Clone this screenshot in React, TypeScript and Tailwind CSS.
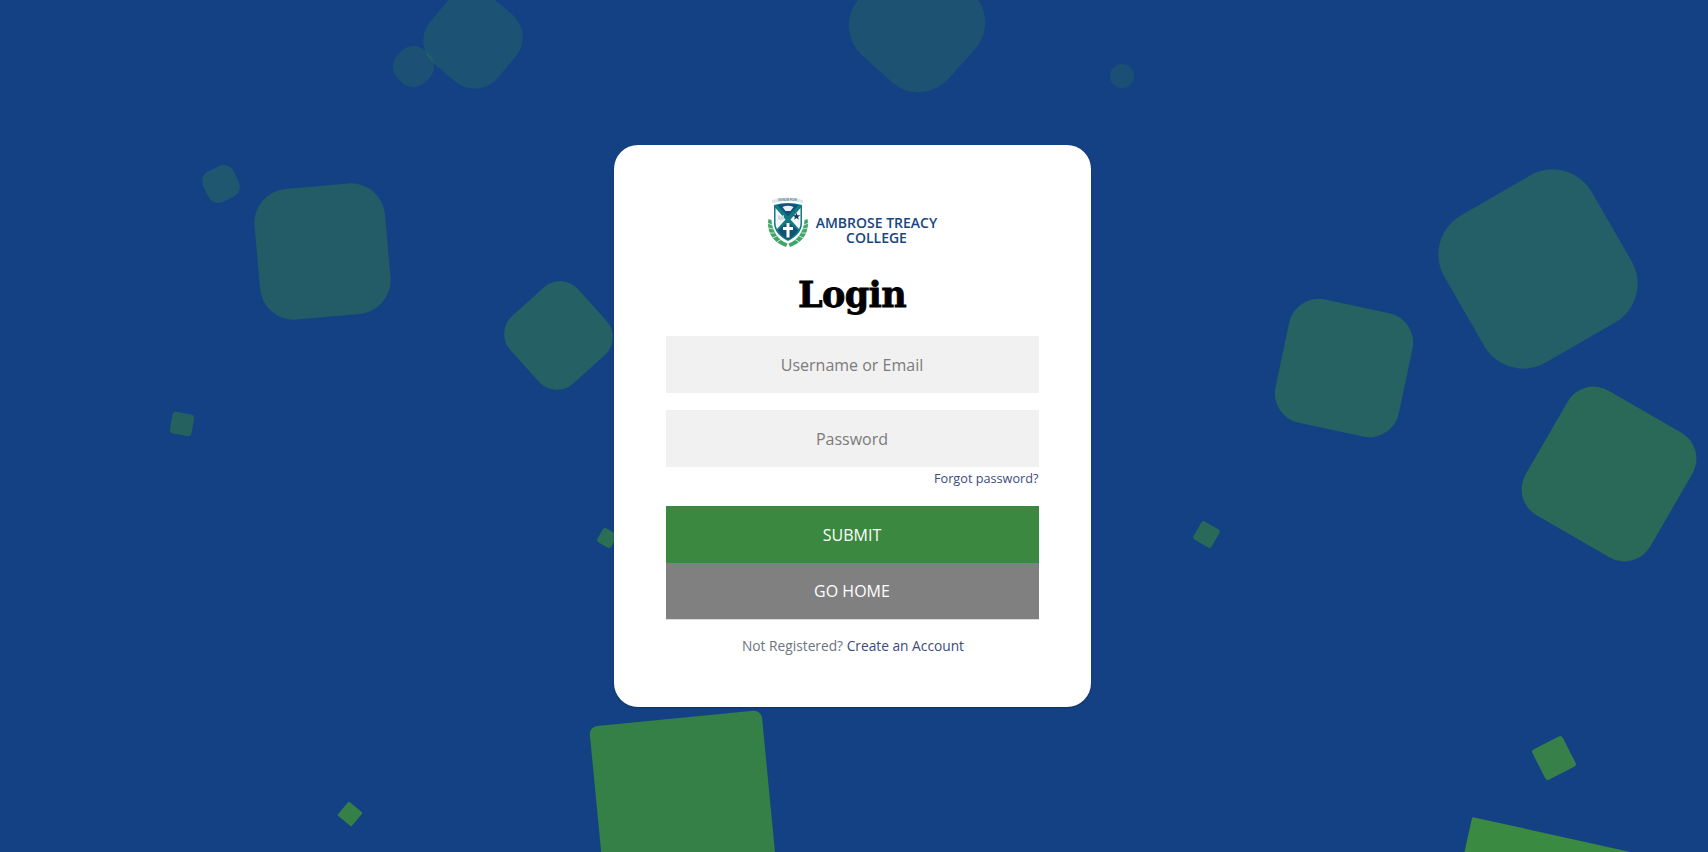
import React from 'react';

const Shapes: React.FC = () => (
  <>
    <div className="absolute left-[429px] top-[-5px] w-[88px] h-[88px] rotate-[40deg] rounded-[30px] bg-[#3a8a42]/[0.23]" />
    <div className="absolute left-[394px] top-[47px] w-[39px] h-[39px] rotate-[45deg] rounded-[17px] bg-[#3a8a42]/[0.22]" />
    <div className="absolute left-[857px] top-[-36px] w-[120px] h-[120px] rotate-[42deg] rounded-[40px] bg-[#1d5273]" />
    <div className="absolute left-[1110px] top-[64px] w-[24px] h-[24px] rounded-full bg-[#1b4f75]" />
    <div className="absolute left-[204px] top-[167px] w-[34px] h-[34px] -rotate-[25deg] rounded-[11px] bg-[#1f5670]" />
    <div className="absolute left-[257px] top-[186px] w-[131px] h-[131px] -rotate-[5deg] rounded-[34px] bg-[#235c67]" />
    <div className="absolute left-[513px] top-[290px] w-[91px] h-[91px] rotate-[48deg] rounded-[24px] bg-[#246064]" />
    <div className="absolute left-[171px] top-[413px] w-[22px] h-[22px] rotate-[10deg] rounded-[4px] bg-[#25625f]" />
    <div className="absolute left-[599px] top-[530px] w-[16px] h-[16px] rotate-[30deg] rounded-[3px] bg-[#2a6e55]" />
    <div className="absolute left-[341px] top-[805px] w-[18px] h-[18px] rotate-[40deg] rounded-[1px] bg-[#348047]" />
    <div className="absolute left-[597px] top-[718px] w-[173px] h-[173px] -rotate-[5.5deg] rounded-[8px] bg-[#348047]" />
    <div className="absolute left-[1441px] top-[842px] w-[260px] h-[260px] rotate-[12.5deg] rounded-[2px] bg-[#3a8a42]" />
    <div className="absolute left-[1537px] top-[741px] w-[34px] h-[34px] -rotate-[27deg] rounded-[3px] bg-[#37804a]" />
    <div className="absolute left-[1196px] top-[524px] w-[21px] h-[21px] rotate-[30deg] rounded-[3px] bg-[#29695a]" />
    <div className="absolute left-[1281px] top-[305px] w-[126px] h-[126px] rotate-[12deg] rounded-[30px] bg-[#266262]" />
    <div className="absolute left-[1453px] top-[184px] w-[170px] h-[170px] -rotate-[30deg] rounded-[45px] bg-[#245e67]" />
    <div className="absolute left-[1537px] top-[402px] w-[144px] h-[144px] rotate-[30deg] rounded-[30px] bg-[#2a6958]" />
  </>
);

const Crest: React.FC = () => (
  <svg width="42" height="52" viewBox="0 0 42 52" className="shrink-0">
    {/* motto banner */}
    <path d="M5 4 Q21 -1 36 4 L36 7 Q21 3 5 7 Z" fill="#dde7ea" />
    <text x="20.500" y="5" textAnchor="middle" fontSize="2.800" fill="#2c4f73" fontFamily="Liberation Sans, sans-serif">
      SIGNUM FIDEI
    </text>
    {/* laurel */}
    <path d="M1.500 23 C-1 35 6 47 19 51 L20.500 47.500 C11 44 5 35 4.500 24 Z" fill="#3fa66a" />
    <path d="M40.500 23 C43 35 36 47 23 51 L21.500 47.500 C31 44 37 35 37.500 24 Z" fill="#3fa66a" />
    <path d="M0.500 27 L5 29 M1 32 L6 33 M2.500 37 L7.500 37 M5.500 42 L10 40 M10 46 L14 43.500" stroke="#fff" strokeWidth="0.7" />
    <path d="M41.500 27 L37 29 M41 32 L36 33 M39.500 37 L34.500 37 M36.500 42 L32 40 M32 46 L28 43.500" stroke="#fff" strokeWidth="0.7" />
    {/* shield */}
    <path d="M7 9 Q21 5 35 9 L35 27 Q35 38 21 45 Q7 38 7 27 Z" fill="#127a80" />
    <path d="M10.500 9 Q21 6.500 31.500 9 L21 20.500 Z" fill="#12527a" />
    <path d="M8.500 12 L18.500 23.500 L10 33 Q8.500 30 8.500 27 Z" fill="#f3f7f7" />
    <path d="M33.500 12 L23.500 23.500 L32 33 Q33.500 30 33.500 27 Z" fill="#f3f7f7" />
    <path d="M21 26 L31 34.500 Q27.500 40 21 43.500 Q14.500 40 11 34.500 Z" fill="#12527a" />
    {/* dove, book, star, cross */}
    <path d="M15.500 11 Q21 8.500 26.500 11 L23.500 15 H18.500 Z" fill="#e9f1f4" />
    <path d="M11 19 L14 20.500 L17 19 V23 L14 24.500 L11 23 Z" fill="#c9dbe0" />
    <path d="M28 16.500 L28.900 19.300 H31.800 L29.500 21 L30.400 23.800 L28 22.100 L25.600 23.800 L26.500 21 L24.200 19.300 H27.100 Z" transform="translate(1.500 0)" fill="#12395f" />
    <path d="M19.500 27 H22.500 V31 H26 V34 H22.500 V41.500 H19.500 V34 H16 V31 H19.500 Z" fill="#fff" />
  </svg>
);

export default function App() {
  return (
    <div className="relative flex h-screen w-full items-center justify-center overflow-hidden bg-[#144184] font-['Open_Sans',sans-serif]">
      <Shapes />
      <div className="relative mr-[3px] flex h-[562px] w-[477px] flex-col items-center rounded-[24px] bg-white pl-[51.500px] pr-[52.500px] pt-[51px] shadow-[0_1px_2px_rgba(0,0,0,0.25)]">
        <div className="flex items-start gap-[7px]">
          <Crest />
          <div className="mt-[19px] text-center font-['Open_Sans',sans-serif] text-[14px] font-semibold leading-[15px] text-[#17467f]">
            AMBROSE TREACY
            <br />
            COLLEGE
          </div>
        </div>
        <h1 className="mt-[24px] font-['DejaVu_Serif',serif] text-[35px] font-bold leading-[46px] tracking-[-0.6px] text-black [-webkit-text-stroke:0.8px_black]">
          Login
        </h1>
        <input
          placeholder="Username or Email"
          className="mt-[18px] h-[57px] w-full bg-[#f1f1f1] text-center text-[16px] outline-none placeholder:text-[#7b7b7b]"
        />
        <input
          type="password"
          placeholder="Password"
          className="mt-[17px] h-[57px] w-full bg-[#f1f1f1] text-center text-[16px] outline-none placeholder:text-[#7b7b7b]"
        />
        <a className="mt-[1px] self-end text-[12.700px] leading-[20px] text-[#3c4b78]">Forgot password?</a>
        <button className="mt-[18px] h-[57px] w-full bg-[#3b8840] text-[16px] uppercase text-white">Submit</button>
        <button className="h-[57px] w-full border-b border-[#dddddd] bg-[#808080] text-[16px] uppercase text-white">Go Home</button>
        <p className="mt-[16px] pl-[2px] text-[13.750px] leading-[20px] text-[#6c757d]">
          Not Registered? <a className="text-[#3c4b78]">Create an Account</a>
        </p>
      </div>
    </div>
  );
}
